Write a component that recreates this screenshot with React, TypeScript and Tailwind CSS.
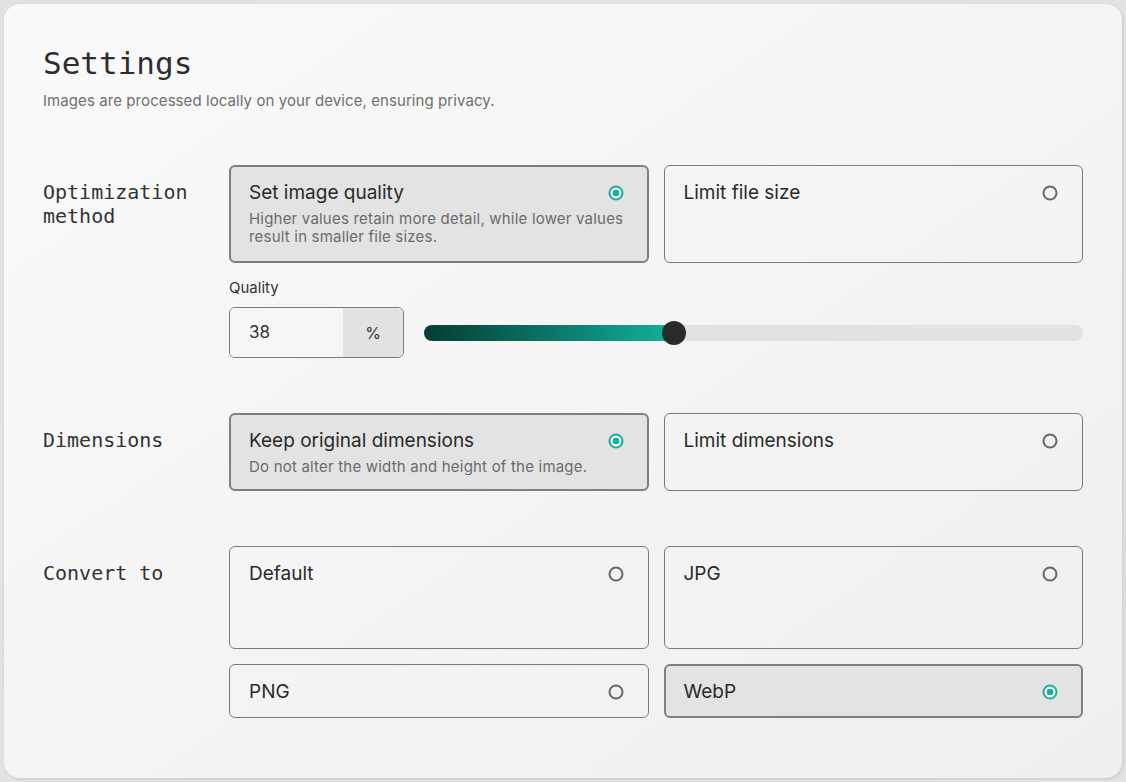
import React from "react";
import clsx from "clsx";

const mono = "font-['DejaVu_Sans_Mono',monospace]";

function Radio({ checked }: { checked: boolean }) {
  return (
    <svg width="16" height="16" viewBox="0 0 16 16" className="mr-[5px] shrink-0">
      {checked ? (
        <>
          <circle cx="8" cy="8" r="6.5" fill="#fff" stroke="#14b39c" strokeWidth="2" />
          <circle cx="8" cy="8" r="3.3" fill="#14b39c" />
        </>
      ) : (
        <circle cx="8" cy="8" r="6.5" fill="none" stroke="#666" strokeWidth="2" />
      )}
    </svg>
  );
}

interface OptionProps {
  title: string;
  desc?: string;
  checked?: boolean;
  h: string;
}

function Option({ title, desc, checked = false, h }: OptionProps) {
  return (
    <div
      className={clsx(
        "flex flex-col rounded-md",
        checked
          ? "border-2 border-[#7f7f7f] bg-[#e3e3e3] px-[18px] pt-[12px]"
          : "border border-[#7a7a7a] px-[19px] pt-[13px]",
        h
      )}
    >
      <div className="flex items-center justify-between">
        <span className="text-[19px] leading-7 text-[#2a2a2a]">{title}</span>
        <Radio checked={checked} />
      </div>
      {desc && (
        <p className="mt-[3px] text-[15px] leading-[18px] tracking-[0.2px] text-[#6b6b6b]">
          {desc}
        </p>
      )}
    </div>
  );
}

function Label({ children }: { children: React.ReactNode }) {
  return (
    <div className={clsx(mono, "pt-[15px] text-[20px] leading-6 text-[#333]")}>
      {children}
    </div>
  );
}

export default function App() {
  const quality = 38;

  return (
    <div className="min-h-screen bg-[#e2e2e2] p-1 font-['Inter',sans-serif]">
      <div className="flex h-[774px] flex-col rounded-2xl bg-linear-to-br from-[#fafafa] to-[#efefef] px-[39px] pt-[39px] shadow-[1px_1px_3px_rgba(0,0,0,0.12)]">
        <h1 className={clsx(mono, "text-[31px] leading-10 text-[#2e2e2e]")}>Settings</h1>
        <p className="mt-[8px] text-[15px] leading-5 tracking-[0.08px] text-[#6f6f6f]">
          Images are processed locally on your device, ensuring privacy.
        </p>

        <div className="mt-[54px] flex flex-col gap-[55px]">
          <div className="grid grid-cols-[186px_1fr]">
            <Label>
              Optimization
              <br />
              method
            </Label>
            <div className="flex flex-col">
              <div className="grid grid-cols-2 gap-[15px]">
                <Option
                  checked
                  h="h-[98px]"
                  title="Set image quality"
                  desc="Higher values retain more detail, while lower values result in smaller file sizes."
                />
                <Option h="h-[98px]" title="Limit file size" />
              </div>
              <span className="mt-[15px] text-[15px] leading-5 text-[#333]">Quality</span>
              <div className="mt-[9px] flex items-center gap-5">
                <div className="flex h-[51px] w-[175px] overflow-hidden rounded-md border border-[#7a7a7a]">
                  <div className="flex flex-1 items-center bg-[#f6f6f6] pl-[19px] text-[17px] text-[#333]">
                    {quality}
                  </div>
                  <div className="flex w-[60px] items-center justify-center bg-[#e2e2e2] text-[16px] text-[#333]">
                    %
                  </div>
                </div>
                <div className="relative h-4 flex-1 rounded-full bg-[#e2e2e2]">
                  <div
                    className="h-4 rounded-full bg-linear-to-r from-[#053d36] to-[#12b39b]"
                    style={{ width: `${quality}%` }}
                  />
                  <div
                    className="absolute top-1/2 h-6 w-6 -translate-x-1/2 -translate-y-1/2 rounded-full bg-[#2a2a2a]"
                    style={{ left: `${quality}%` }}
                  />
                </div>
              </div>
            </div>
          </div>

          <div className="grid grid-cols-[186px_1fr]">
            <Label>Dimensions</Label>
            <div className="grid grid-cols-2 gap-[15px]">
              <Option
                checked
                h="h-[78px]"
                title="Keep original dimensions"
                desc="Do not alter the width and height of the image."
              />
              <Option h="h-[78px]" title="Limit dimensions" />
            </div>
          </div>

          <div className="grid grid-cols-[186px_1fr]">
            <Label>Convert to</Label>
            <div className="grid grid-cols-2 gap-[15px]">
              <Option h="h-[103px]" title="Default" />
              <Option h="h-[103px]" title="JPG" />
              <Option h="h-[54px]" title="PNG" />
              <Option checked h="h-[54px]" title="WebP" />
            </div>
          </div>
        </div>
      </div>
    </div>
  );
}
